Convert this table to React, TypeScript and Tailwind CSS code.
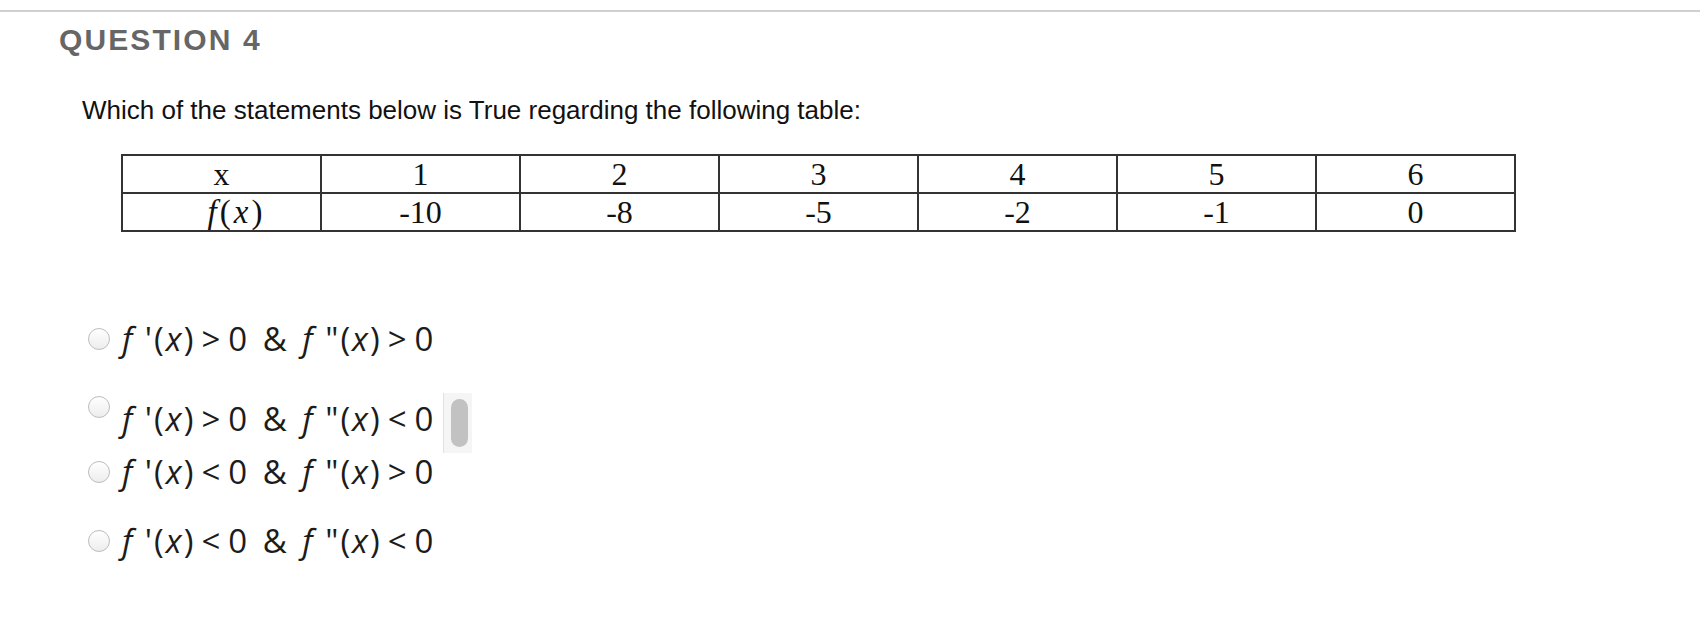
import React from 'react'

const xs = ['1', '2', '3', '4', '5', '6']
const fx = ['-10', '-8', '-5', '-2', '-1', '0']

function Radio() {
  return (
    <span className="block w-[22px] h-[22px] shrink-0 rounded-full border border-[#bdbdbd] bg-gradient-to-b from-white to-[#ededed]" />
  )
}

function Expr({ op1, op2 }: { op1: string; op2: string }) {
  return (
    <span className="font-['Open_Sans',sans-serif] text-[33px] leading-[30px] tracking-[2px] text-[#1c1c1c] whitespace-pre">
      <i>f</i> '(<i>x</i>)<span className="mx-[6px]">{op1}</span>0<span className="mx-[3px]"> &amp; </span><i>f</i> "(<i>x</i>)<span className="mx-[6px]">{op2}</span>0
    </span>
  )
}

export default function App() {
  return (
    <div className="w-full h-[622px] bg-white pt-[10px] overflow-hidden">
      <div className="border-t-2 border-[#d0d0d0]" />

      <h2 className="ml-[59px] mt-[13px] font-['Liberation_Sans',Arial,sans-serif] text-[30px] leading-none font-bold tracking-[0.07em] text-[#666666]">
        QUESTION 4
      </h2>

      <p className="ml-[82px] mt-[42px] font-['Liberation_Sans',Arial,sans-serif] text-[26px] leading-none text-[#111111]">
        Which of the statements below is True regarding the following table:
      </p>

      <table className="ml-[121px] mt-[31px] w-[1395px] table-fixed border-collapse font-['Liberation_Serif','Times_New_Roman',serif] text-[32px] leading-none text-[#111111]">
        <tbody>
          <tr>
            <td className="h-[38px] p-0 border-2 border-[#333333] text-center align-middle">x</td>
            {xs.map(v => (
              <td key={v} className="h-[38px] p-0 border-2 border-[#333333] text-center align-middle">{v}</td>
            ))}
          </tr>
          <tr>
            <td className="h-[38px] p-0 pl-[30px] border-2 border-[#333333] text-center align-middle text-[33px] tracking-[3px]">
              <i>f</i>(<i>x</i>)
            </td>
            {fx.map((v, i) => (
              <td key={i} className="h-[38px] p-0 border-2 border-[#333333] text-center align-middle">{v}</td>
            ))}
          </tr>
        </tbody>
      </table>

      {/* choix */}
      <div className="ml-[88px] mt-[92px] flex flex-col">
        <label className="flex items-center h-[30px] gap-[12px]">
          <Radio />
          <Expr op1=">" op2=">" />
        </label>

        <label className="flex items-start mt-[39px] h-[60px] gap-[12px]">
          <span className="mt-[3px]"><Radio /></span>
          <span className="mt-[11px]"><Expr op1=">" op2="<" /></span>
          <span className="ml-[-4px] w-[29px] h-[60px] bg-[#f5f5f5] border-l border-[#e2e2e2] pt-[6px] pl-[7px]">
            <span className="block w-[17px] h-[48px] rounded-full bg-[#c2c2c2]" />
          </span>
        </label>

        <label className="flex items-center h-[30px] mt-[4px] gap-[12px]">
          <Radio />
          <Expr op1="<" op2=">" />
        </label>

        <label className="flex items-center h-[30px] mt-[39px] gap-[12px]">
          <Radio />
          <Expr op1="<" op2="<" />
        </label>
      </div>
    </div>
  )
}
